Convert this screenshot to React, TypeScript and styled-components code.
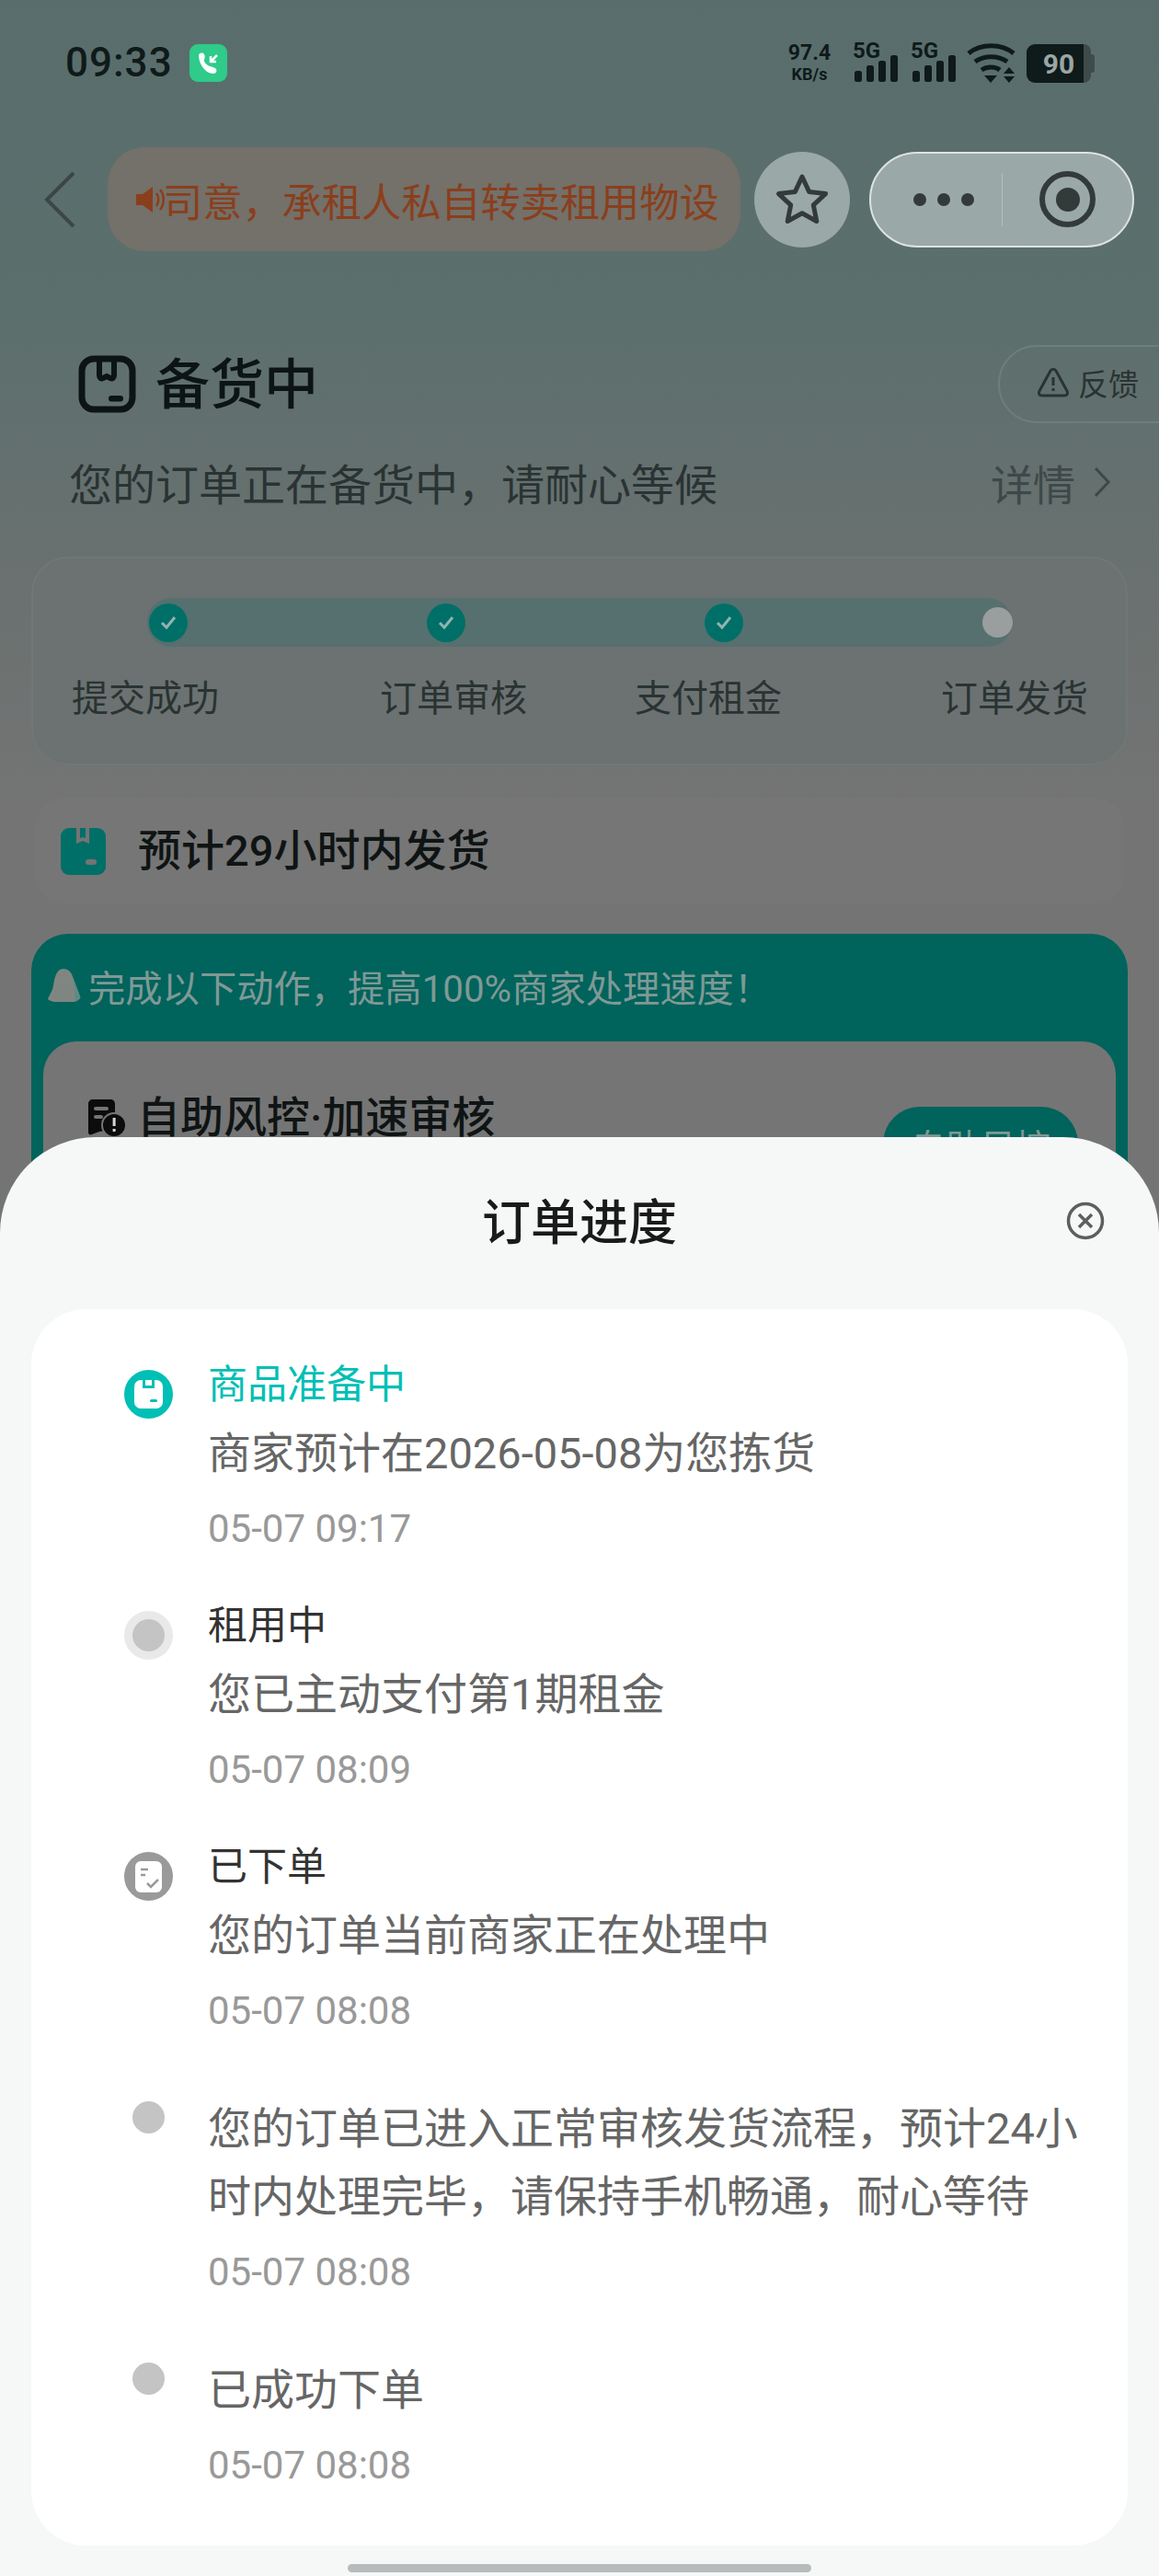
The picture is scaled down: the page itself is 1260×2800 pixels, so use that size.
import React from 'react';
import styled, { createGlobalStyle } from 'styled-components';

const GlobalStyle = createGlobalStyle`
  html, body {
    margin: 0;
    padding: 0;
    background: #f6f8f8;
  }
  * {
    box-sizing: border-box;
  }
`;

const font = `Roboto, "Noto Sans CJK SC", sans-serif`;
const cjk = `"Noto Sans CJK SC", Roboto, sans-serif`;

const BoxOutlineIc = () => (
  <svg width="63" height="63" viewBox="0 0 63 63" fill="none">
    <rect x="4" y="4" width="55" height="55" rx="13" stroke="#0c1414" strokeWidth="7" />
    <path d="M23 5v17c0 3 2 4 4 3l4-2 4 2c2 1 4 0 4-3V5" stroke="#0c1414" strokeWidth="6" />
    <rect x="33" y="44" width="16" height="6.5" rx="3.2" fill="#0c1414" />
  </svg>
);

const BoxFilledIc = () => (
  <svg width="49" height="51" viewBox="0 0 49 51">
    <rect width="49" height="51" rx="9" fill="#006f68" />
    <path d="M17 0v17l7-3 7 3V0h-4v11l-3-1-3 1V0z" fill="#747474" />
    <rect x="27" y="34" width="12" height="6" rx="3" fill="#747474" />
  </svg>
);

const BagIc = () => (
  <svg width="36" height="38" viewBox="0 0 36 38">
    <path d="M17 1c4 0 7 2 9 6l9 24c1 2-1 3-2 4l-4 2H8c-3 0-7-2-8-3 0-1 5-9 6-14 1-8 3-19 11-19z" fill="#7f8682" />
    <path d="M26 7l9 24c1 2-1 3-2 4l-4 2c1-10 0-22-3-30z" fill="#5f8a82" />
  </svg>
);

const RiskIc = () => (
  <svg width="42" height="42" viewBox="0 0 42 42">
    <path d="M5 0h19c3 0 5 2 5 5v27l-4 4-6-2-7 1-8 3c-2 1-4 0-4-2V5c0-3 2-5 5-5z" fill="#0c0c0c" />
    <rect x="6" y="8" width="16" height="4" rx="2" fill="#757575" />
    <rect x="6" y="17" width="10" height="4" rx="2" fill="#757575" />
    <circle cx="28" cy="28" r="13" fill="#0c0c0c" stroke="#757575" strokeWidth="2" />
    <rect x="26.6" y="20" width="3" height="9" fill="#d5d5d5" />
    <rect x="26.6" y="32" width="3" height="3" fill="#d5d5d5" />
  </svg>
);

const SignalIc = () => (
  <svg width="48" height="30" viewBox="0 0 48 30" fill="#0f1a1a">
    <rect x="0" y="17" width="8" height="12" rx="2.5" />
    <rect x="13" y="11" width="8" height="18" rx="2.5" />
    <rect x="26" y="6" width="8" height="23" rx="2.5" />
    <rect x="39" y="0" width="8" height="29" rx="2.5" />
  </svg>
);

const WifiIc = () => (
  <svg width="54" height="44" viewBox="0 0 54 44" fill="none" stroke="#0f1a1a" strokeWidth="5">
    <path d="M2 12C15 1 38 1 51 12" />
    <path d="M9 21c10-7 25-7 35 0" />
    <path d="M16 30c6-4 15-4 20 0" />
    <path d="M19 36h14l-7 8z" fill="#0f1a1a" stroke="none" />
    <path d="M40 34l6-7 6 7zM40 37h12l-6 7z" fill="#0f1a1a" stroke="none" />
  </svg>
);

const CallIc = () => (
  <svg width="41" height="41" viewBox="0 0 41 41">
    <rect width="41" height="41" rx="9" fill="#2ecb8a" />
    <path d="M10 12c0-2 3-3 5-2 2 1 2 5 1 7-1 2 3 6 6 7 3 1 5 1 7 3 1 2 0 5-3 5-9 0-16-11-16-20z" fill="#fff" />
    <path d="M30 12l-7 7M23 13v6h6" stroke="#fff" strokeWidth="2.5" fill="none" />
  </svg>
);

const SpeakerIc = () => (
  <svg width="34" height="34" viewBox="0 0 34 34" fill="#8a3f1c">
    <path d="M2 11h7l11-8v28L9 23H2z" />
    <path d="M24 10c3 4 3 10 0 14M28 6c5 6 5 16 0 22" fill="none" stroke="#8a3f1c" strokeWidth="2.6" />
  </svg>
);

const BackIc = () => (
  <svg width="36" height="62" viewBox="0 0 36 62" fill="none">
    <path d="M33 2L4 31l29 29" stroke="#3c4646" strokeWidth="4" />
  </svg>
);

const StarIc = () => (
  <svg width="60" height="60" viewBox="0 0 60 60" fill="none">
    <path
      d="M30 5l7.6 16.4 17.9 2.2-13.2 12.2 3.5 17.7L30 44.7l-15.8 8.8 3.5-17.7L4.5 23.600l17.900-2.200z"
      stroke="#333a3a"
      strokeWidth="5"
      strokeLinejoin="round"
    />
  </svg>
);

const WarnIc = () => (
  <svg width="36" height="34" viewBox="0 0 36 34" fill="none">
    <path d="M15 4c1.500-2.500 4.500-2.500 6 0l12 22c1.500 3 0 5-3 5H6c-3 0-4.500-2-3-5z" stroke="#2a3333" strokeWidth="3" />
    <path d="M18 11v9M18 23v3" stroke="#2a3333" strokeWidth="3" />
  </svg>
);

const CloseIc = () => (
  <svg width="42" height="42" viewBox="0 0 42 42" fill="none">
    <circle cx="21" cy="21" r="18.500" stroke="#5e5e5e" strokeWidth="3.500" />
    <path d="M14 14l14 14M28 14L14 28" stroke="#5e5e5e" strokeWidth="3.500" />
  </svg>
);

const CheckIc = () => (
  <svg width="20" height="18" viewBox="0 0 20 18" fill="none">
    <path d="M3 9l5 5 9-11" stroke="#8fb5b0" strokeWidth="3" />
  </svg>
);

const SheetBoxIc = () => (
  <svg width="53" height="53" viewBox="0 0 53 53">
    <circle cx="26.500" cy="26.500" r="26.500" fill="#00bfb5" />
    <rect x="11" y="11" width="31" height="31" rx="7" fill="#fff" />
    <path d="M20 11v9h13v-9h-3v6h-7v-6z" fill="#00bfb5" />
    <rect x="28" y="32" width="8" height="3" rx="1.500" fill="#00bfb5" />
  </svg>
);

const SheetDocIc = () => (
  <svg width="53" height="53" viewBox="0 0 53 53">
    <circle cx="26.500" cy="26.500" r="26.500" fill="#9a9a9a" />
    <rect x="12" y="10" width="29" height="34" rx="6" fill="#fff" />
    <path d="M18 19h8M18 25h5" stroke="#9a9a9a" strokeWidth="2.500" />
    <path d="M25 34l4 4 8-8" stroke="#9a9a9a" strokeWidth="2.500" fill="none" />
  </svg>
);

type MarkerKind = 'box' | 'ring' | 'doc' | 'dot';

interface TimelineEntry {
  kind: MarkerKind;
  title?: string;
  active?: boolean;
  lines: string[];
  time: string;
}

const entries: TimelineEntry[] = [
  { kind: 'box', title: '商品准备中', active: true, lines: ['商家预计在2026-05-08为您拣货'], time: '05-07 09:17' },
  { kind: 'ring', title: '租用中', lines: ['您已主动支付第1期租金'], time: '05-07 08:09' },
  { kind: 'doc', title: '已下单', lines: ['您的订单当前商家正在处理中'], time: '05-07 08:08' },
  {
    kind: 'dot',
    lines: ['您的订单已进入正常审核发货流程，预计24小', '时内处理完毕，请保持手机畅通，耐心等待'],
    time: '05-07 08:08',
  },
  { kind: 'dot', lines: ['已成功下单'], time: '05-07 08:08' },
];

const stepLabels = ['提交成功', '订单审核', '支付租金', '订单发货'];

const Marker = ({ kind }: { kind: MarkerKind }) => {
  if (kind === 'box') return <SheetBoxIc />;
  if (kind === 'doc') return <SheetDocIc />;
  if (kind === 'ring') return <RingDot />;
  return <PlainDot />;
};

const App = () => (
  <Page>
    <GlobalStyle />
    <StatusBar>
      <Clock>09:33</Clock>
      <CallIc />
      <StatusRight>
        <Speed>
          <b>97.4</b>
          <span>KB/s</span>
        </Speed>
        <Network>
          <NetLabel>5G</NetLabel>
          <SignalIc />
        </Network>
        <Network>
          <NetLabel>5G</NetLabel>
          <SignalIc />
        </Network>
        <WifiIc />
        <Battery>
          <BatteryFill>90</BatteryFill>
          <BatteryRest />
          <BatteryTip />
        </Battery>
      </StatusRight>
    </StatusBar>

    <NavBar>
      <BackIc />
      <Notice>
        <SpeakerIc />
        <NoticeText>司意，承租人私自转卖租用物设</NoticeText>
      </Notice>
      <StarButton>
        <StarIc />
      </StarButton>
      <Capsule>
        <Dots>
          <i />
          <i />
          <i />
        </Dots>
        <CapsuleDivider />
        <Target>
          <i />
        </Target>
      </Capsule>
    </NavBar>

    <TitleRow>
      <BoxOutlineIc />
      <Title>备货中</Title>
      <Feedback>
        <WarnIc />
        <span>反馈</span>
      </Feedback>
    </TitleRow>

    <SubRow>
      <SubText>您的订单正在备货中，请耐心等候</SubText>
      <Details>
        详情
        <svg width="20" height="34" viewBox="0 0 20 34" fill="none">
          <path d="M3 2l14 15L3 32" stroke="#3e4848" strokeWidth="3" />
        </svg>
      </Details>
    </SubRow>

    <StepsCard>
      <Track>
        <StepDot>
          <CheckIc />
        </StepDot>
        <StepDot>
          <CheckIc />
        </StepDot>
        <StepDot>
          <CheckIc />
        </StepDot>
        <StepEnd />
      </Track>
      <StepLabels>
        {stepLabels.map((label) => (
          <StepLabel key={label}>{label}</StepLabel>
        ))}
      </StepLabels>
    </StepsCard>

    <EstimateCard>
      <BoxFilledIc />
      <EstimateText>预计29小时内发货</EstimateText>
    </EstimateCard>

    <TealCard>
      <TealHead>
        <BagIc />
        <span>完成以下动作，提高100%商家处理速度！</span>
      </TealHead>
      <ActionCard>
        <ActionTitle>
          <RiskIc />
          <EstimateText>自助风控·加速审核</EstimateText>
        </ActionTitle>
        <ActionButton>自助风控</ActionButton>
      </ActionCard>
    </TealCard>

    <Sheet>
      <SheetHeader>
        <SheetTitle>订单进度</SheetTitle>
        <CloseSlot>
          <CloseIc />
        </CloseSlot>
      </SheetHeader>
      <TimelineCard>
        {entries.map((entry, i) => (
          <Entry key={i} $plain={!entry.title}>
            <MarkerCol $plain={!entry.title}>
              <Marker kind={entry.kind} />
            </MarkerCol>
            <EntryBody>
              {entry.title && <EntryTitle $active={entry.active}>{entry.title}</EntryTitle>}
              {entry.lines.map((line) => (
                <EntryLine key={line}>{line}</EntryLine>
              ))}
              <EntryTime>{entry.time}</EntryTime>
            </EntryBody>
          </Entry>
        ))}
      </TimelineCard>
      <HomeBar />
    </Sheet>
  </Page>
);

const Page = styled.div`
  position: relative;
  display: flex;
  flex-direction: column;
  width: 1260px;
  height: 2800px;
  overflow: hidden;
  font-family: ${font};
  background: linear-gradient(180deg, #596e6c 0, #5b6f6d 320px, #6a7170 640px, #747474 880px, #747474 100%);
`;

const StatusBar = styled.div`
  display: flex;
  align-items: center;
  gap: 18px;
  flex-shrink: 0;
  height: 42px;
  margin-top: 47px;
  padding: 0 70px 0 71px;
`;

const Clock = styled.div`
  font-size: 44px;
  font-weight: 500;
  letter-spacing: 1px;
  color: #0f1a1a;
`;

const StatusRight = styled.div`
  display: flex;
  align-items: flex-end;
  height: 44px;
  margin-left: auto;
`;

const Speed = styled.div`
  display: flex;
  flex-direction: column;
  align-items: center;
  width: 50px;
  margin-right: 24px;
  color: #0f1a1a;
  line-height: 1;

  b {
    font-size: 23px;
    font-weight: 700;
  }

  span {
    margin-top: 3px;
    font-size: 18px;
    font-weight: 700;
  }
`;

const Network = styled.div`
  position: relative;
  width: 48px;
  height: 30px;
  margin-right: 15px;

  & + & {
    margin-right: 11px;
  }
`;

const NetLabel = styled.span`
  position: absolute;
  left: -2px;
  top: -17px;
  font-size: 24px;
  font-weight: 700;
  line-height: 1;
  color: #0f1a1a;
`;

const Battery = styled.div`
  display: flex;
  align-items: center;
  height: 42px;
  margin-left: 11px;
`;

const BatteryFill = styled.div`
  display: flex;
  align-items: center;
  justify-content: center;
  width: 62px;
  height: 42px;
  padding-left: 8px;
  border-radius: 9px 0 0 9px;
  font-size: 30px;
  font-weight: 700;
  color: #9aa6a5;
  background: #0f1a1a;
`;

const BatteryRest = styled.div`
  width: 8px;
  height: 42px;
  border-radius: 0 8px 8px 0;
  background: #3d4c4b;
`;

const BatteryTip = styled.div`
  width: 4px;
  height: 20px;
  border-radius: 0 3px 3px 0;
  background: #3d4c4b;
`;

const NavBar = styled.div`
  display: flex;
  align-items: center;
  flex-shrink: 0;
  height: 113px;
  margin-top: 71px;
  padding-left: 47px;
`;

const Notice = styled.div`
  display: flex;
  align-items: center;
  gap: 0;
  width: 688px;
  height: 113px;
  margin-left: 34px;
  padding-left: 29px;
  border-radius: 40px;
  overflow: hidden;
  background: #74706a;
`;

const NoticeText = styled.span`
  margin-left: -3px;
  font-family: ${cjk};
  font-size: 43.2px;
  white-space: nowrap;
  color: #8a3f1c;
`;

const StarButton = styled.div`
  display: flex;
  align-items: center;
  justify-content: center;
  flex-shrink: 0;
  width: 104px;
  height: 104px;
  margin-left: 15px;
  border-radius: 50%;
  background: #9aa8a7;
`;

const Capsule = styled.div`
  display: flex;
  align-items: center;
  flex-shrink: 0;
  width: 288px;
  height: 104px;
  margin-left: 21px;
  border: 2px solid #dde3e2;
  border-radius: 52px;
  background: #9aa8a7;
`;

const Dots = styled.div`
  display: flex;
  justify-content: space-between;
  width: 66px;
  margin-left: 46px;

  i {
    width: 14px;
    height: 14px;
    border-radius: 50%;
    background: #333a3a;
  }
`;

const CapsuleDivider = styled.div`
  width: 1px;
  height: 58px;
  margin-left: 30px;
  background: #b4c0bf;
`;

const Target = styled.div`
  display: flex;
  align-items: center;
  justify-content: center;
  width: 61px;
  height: 61px;
  margin-left: 40px;
  border: 6px solid #333a3a;
  border-radius: 50%;

  i {
    width: 26px;
    height: 26px;
    border-radius: 50%;
    background: #333a3a;
  }
`;

const TitleRow = styled.div`
  display: flex;
  align-items: center;
  flex-shrink: 0;
  height: 85px;
  margin-top: 102px;
  padding-left: 85px;
`;

const Title = styled.h1`
  margin: 0 0 0 21px;
  padding-bottom: 8px;
  font-family: ${cjk};
  font-size: 59px;
  font-weight: 500;
  color: #0c1414;
`;

const Feedback = styled.div`
  display: flex;
  align-items: center;
  gap: 9px;
  flex-shrink: 0;
  width: 220px;
  height: 85px;
  margin-left: auto;
  margin-right: -45px;
  padding: 0 0 4px 40px;
  border: 2px solid #6d7e7c;
  border-radius: 42px 0 0 42px;
  font-family: ${cjk};
  font-size: 33px;
  color: #2a3333;
`;

const SubRow = styled.div`
  display: flex;
  align-items: center;
  justify-content: space-between;
  flex-shrink: 0;
  height: 55px;
  margin-top: 36px;
  margin-bottom: 4px;
  padding: 0 52px 0 75px;
`;

const SubText = styled.div`
  font-family: ${cjk};
  font-size: 47px;
  color: #2a3333;
`;

const Details = styled.div`
  display: flex;
  align-items: center;
  gap: 19px;
  font-family: ${cjk};
  font-size: 46px;
  color: #3e4848;
`;

const StepsCard = styled.div`
  flex-shrink: 0;
  height: 227px;
  margin: 50px 34px 0;
  padding-top: 43px;
  border: 2px solid #6e7877;
  border-radius: 40px;
  background: #6b7271;
`;

const Track = styled.div`
  display: flex;
  align-items: center;
  gap: 260px;
  width: 940px;
  height: 53px;
  margin-left: 124px;
  padding: 0 3px 0 2px;
  border-radius: 26px;
  background: #55706f;
`;

const StepDot = styled.div`
  display: flex;
  align-items: center;
  justify-content: center;
  flex-shrink: 0;
  width: 42px;
  height: 42px;
  border-radius: 50%;
  background: #006f68;
`;

const StepEnd = styled.div`
  flex-shrink: 0;
  width: 33px;
  height: 33px;
  margin-left: auto;
  border-radius: 50%;
  background: #9a9e9e;
`;

const StepLabels = styled.div`
  display: grid;
  grid-template-columns: 335px 277px 333px auto;
  margin-top: 25px;
  padding-left: 42px;
`;

const StepLabel = styled.div`
  font-family: ${cjk};
  font-size: 40px;
  line-height: 56px;
  color: #2a3333;
`;

const EstimateCard = styled.div`
  display: flex;
  align-items: center;
  gap: 35px;
  flex-shrink: 0;
  height: 114px;
  margin: 36px 38px 0;
  padding-left: 28px;
  border-radius: 30px;
  background: #767676;
`;

const EstimateText = styled.div`
  padding-bottom: 10px;
  font-family: ${font};
  font-size: 47px;
  font-weight: 500;
  color: #0f1414;
`;

const TealCard = styled.div`
  flex-shrink: 0;
  height: 400px;
  margin: 33px 34px 0;
  padding: 0 13px;
  border-radius: 40px;
  background: #00635c;
`;

const TealHead = styled.div`
  display: flex;
  align-items: center;
  gap: 8px;
  height: 117px;
  padding: 0 0 5px 5px;
  font-size: 40.3px;
  color: #7f9995;
`;

const ActionCard = styled.div`
  position: relative;
  height: 300px;
  padding: 44px 0 0 49px;
  border-radius: 36px 36px 0 0;
  background: #757575;
`;

const ActionTitle = styled.div`
  display: flex;
  align-items: center;
  gap: 11px;
`;

const ActionButton = styled.div`
  position: absolute;
  top: 71px;
  right: 41px;
  display: flex;
  align-items: center;
  justify-content: center;
  width: 212px;
  height: 80px;
  border-radius: 40px;
  font-family: ${cjk};
  font-size: 38px;
  color: #7f9995;
  background: #00635c;
`;

const Sheet = styled.div`
  position: absolute;
  left: 0;
  right: 0;
  top: 1236px;
  bottom: 0;
  border-radius: 104px 104px 0 0;
  background: #f6f8f8;
`;

const SheetHeader = styled.div`
  display: grid;
  grid-template-columns: 1fr auto 1fr;
  align-items: center;
  height: 187px;
  padding: 0 59px;
`;

const SheetTitle = styled.h2`
  grid-column: 2;
  margin: 0;
  padding-bottom: 10px;
  font-family: ${cjk};
  font-size: 53px;
  font-weight: 500;
  color: #1a1a1a;
`;

const CloseSlot = styled.div`
  display: flex;
  justify-self: end;
  padding-bottom: 6px;
`;

const TimelineCard = styled.div`
  display: flex;
  flex-direction: column;
  gap: 46px;
  height: 1344px;
  margin: 0 34px;
  padding-top: 48px;
  border-radius: 60px;
  background: #fff;
`;

const Entry = styled.div<{ $plain?: boolean }>`
  display: flex;
  padding-top: ${({ $plain }) => ($plain ? '20px' : '0')};
`;

const MarkerCol = styled.div<{ $plain?: boolean }>`
  display: flex;
  justify-content: center;
  flex-shrink: 0;
  width: 53px;
  height: 60px;
  margin: ${({ $plain }) => ($plain ? '7px' : '18px')} 38px 0 101px;
`;

const RingDot = styled.div`
  display: flex;
  align-items: center;
  justify-content: center;
  width: 53px;
  height: 53px;
  border-radius: 50%;
  background: #e9e9e9;

  &::after {
    content: '';
    width: 35px;
    height: 35px;
    border-radius: 50%;
    background: #c4c4c4;
  }
`;

const PlainDot = styled.div`
  width: 35px;
  height: 35px;
  border-radius: 50%;
  background: #c4c4c4;
`;

const EntryBody = styled.div`
  display: flex;
  flex-direction: column;
`;

const EntryTitle = styled.div<{ $active?: boolean }>`
  margin-bottom: 12px;
  font-family: ${cjk};
  font-size: 43px;
  line-height: 60px;
  color: ${({ $active }) => ($active ? '#00bfb5' : '#333')};
`;

const EntryLine = styled.div`
  font-size: 47px;
  line-height: 74px;
  white-space: nowrap;
  color: #666;
`;

const EntryTime = styled.div`
  margin-top: 20px;
  font-size: 42px;
  line-height: 50px;
  color: #999;
`;

const HomeBar = styled.div`
  width: 504px;
  height: 9px;
  margin: 20px auto 0;
  border-radius: 5px;
  background: #b8bbbb;
`;

export default App;
